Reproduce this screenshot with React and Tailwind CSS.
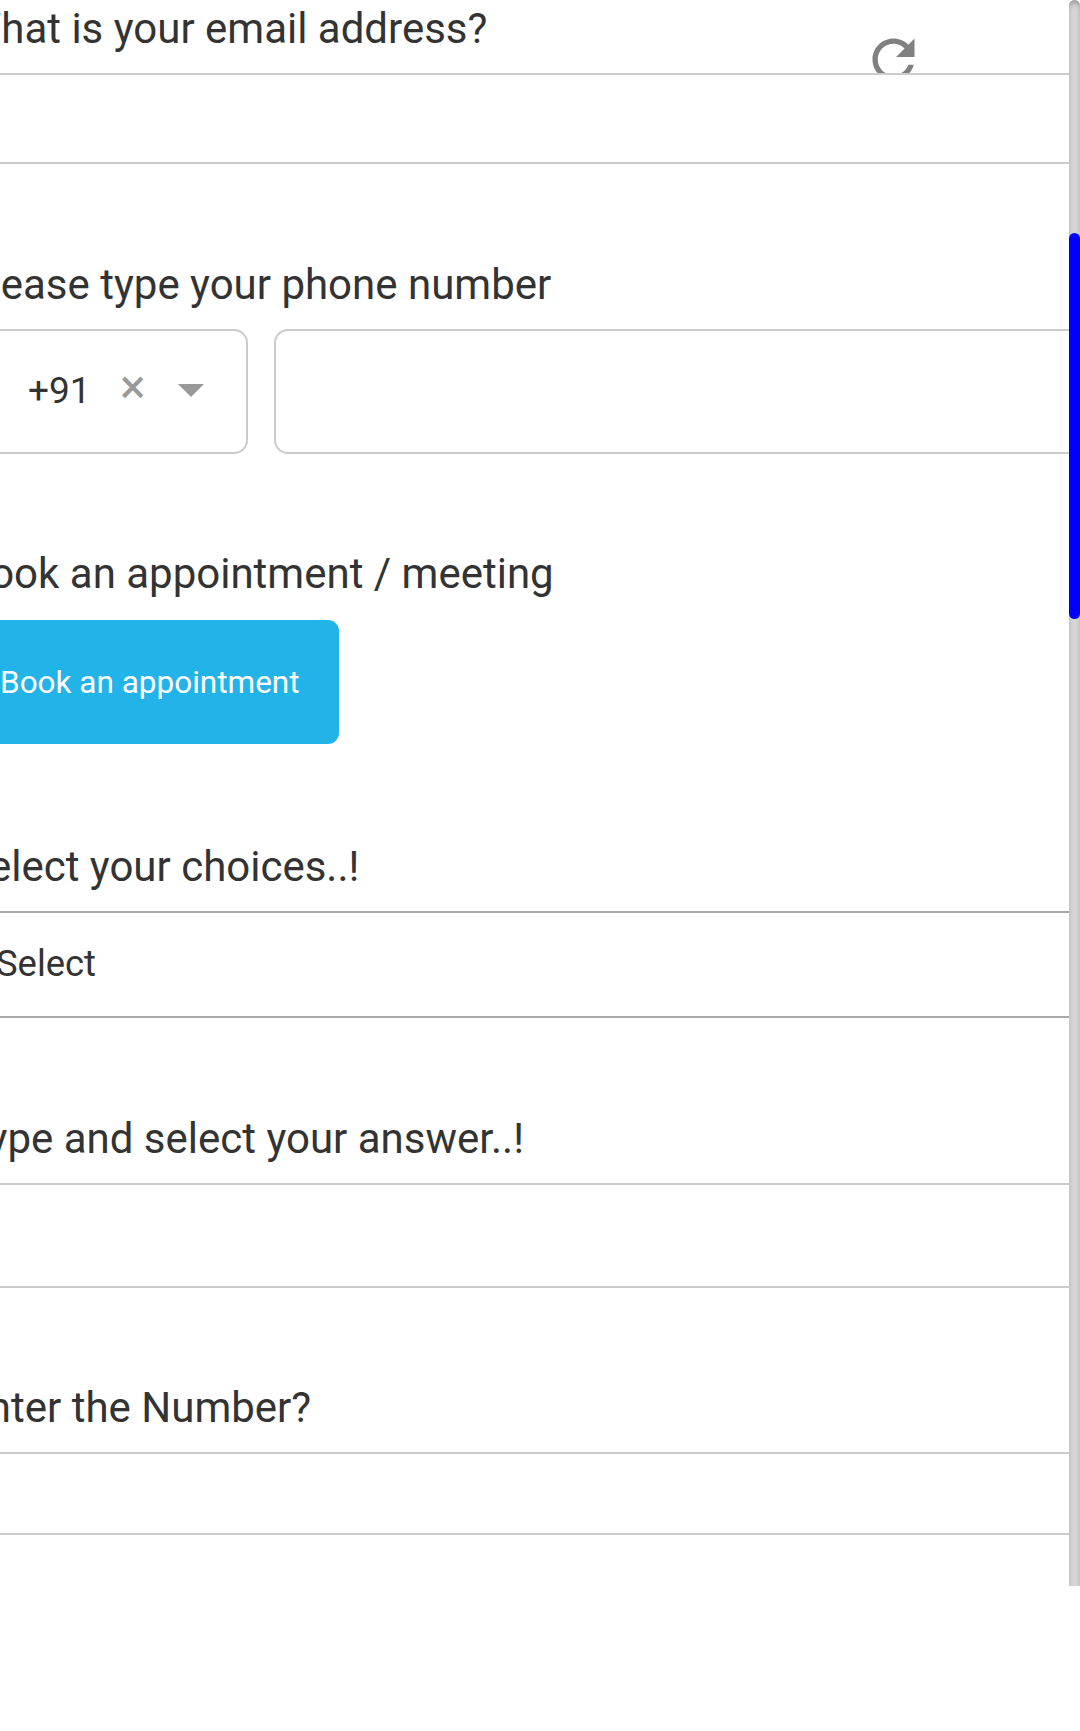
function Field({ label, className, children }) {
  return (
    <section className={className}>
      <h2 className="-ml-9 text-[42px] leading-[49px] whitespace-nowrap">{label}</h2>
      {children}
    </section>
  );
}

function RefreshIcon() {
  return (
    <svg viewBox="0 0 24 24" className="absolute top-[28px] left-[862px] h-[63px] w-[63px]" fill="#808080">
      <path d="M17.65 6.35C16.2 4.9 14.21 4 12 4c-4.42 0-7.99 3.58-7.99 8s3.57 8 7.99 8c3.73 0 6.84-2.55 7.73-6h-2.08c-.82 2.33-3.04 4-5.65 4-3.31 0-6-2.69-6-6s2.69-6 6-6c1.66 0 3.14.69 4.22 1.78L13 11h7V4l-2.35 2.35z" />
    </svg>
  );
}

export default function App() {
  return (
    <div className="h-[1731px] w-[1080px] overflow-hidden bg-white font-[Roboto,sans-serif] text-[#333]">
      <div className="flex h-[1586px] overflow-hidden">
        <main className="relative w-[1069px] overflow-hidden pt-1">
          <RefreshIcon />
          <Field label="What is your email address?">
            <div className="relative mt-5 h-[91px] border-y-2 border-[#ccc] bg-white" />
          </Field>

          <Field label="Please type your phone number" className="mt-24">
            <div className="mt-5 flex gap-[26px]">
              <div className="flex h-[125px] w-[248px] items-center rounded-r-[14px] border-2 border-l-0 border-[#ccc] pb-[2px]">
                <span className="ml-[28px] w-[60px] text-[37px] leading-[44px]">+91</span>
                <span className="-mt-[8px] ml-[32px] w-[26px] text-[48px] leading-[48px] text-[#999]">×</span>
                <svg viewBox="0 0 26 13" className="ml-[32px] h-[13px] w-[26px]" fill="#999">
                  <path d="M0 0h26L13 13z" />
                </svg>
              </div>
              <div className="h-[125px] flex-1 rounded-l-[14px] border-2 border-r-0 border-[#ccc]" />
            </div>
          </Field>

          <Field label="Book an appointment / meeting" className="mt-[95px]">
            <button className="mt-[22px] block h-[124px] w-[339px] rounded-r-[11px] bg-[#22b3e9] pt-[2px] text-left text-[31.5px] whitespace-nowrap text-white">
              Book an appointment
            </button>
          </Field>

          <Field label="Select your choices..!" className="mt-[98px]">
            <div className="mt-5 flex h-[107px] items-center border-y-2 border-[#aaa] pb-[2px]">
              <span className="-ml-1 text-[36.4px] leading-[44px]">Select</span>
            </div>
          </Field>

          <Field label="Type and select your answer..!" className="mt-24">
            <div className="mt-5 h-[105px] border-y-2 border-[#ccc]" />
          </Field>

          <Field label="Enter the Number?" className="mt-[95px]">
            <div className="mt-5 h-[83px] border-y-2 border-[#ccc]" />
          </Field>
        </main>

        <div className="h-[1620px] w-[11px] rounded-t-[8px] bg-[#dadada] pt-[233px] shadow-[inset_0_0_6px_rgba(0,0,0,0.2),inset_0_8px_8px_-8px_rgba(0,0,0,0.35)]">
          <div className="h-[386px] rounded-[8px] bg-[#0000ff]" />
        </div>
      </div>
    </div>
  );
}
